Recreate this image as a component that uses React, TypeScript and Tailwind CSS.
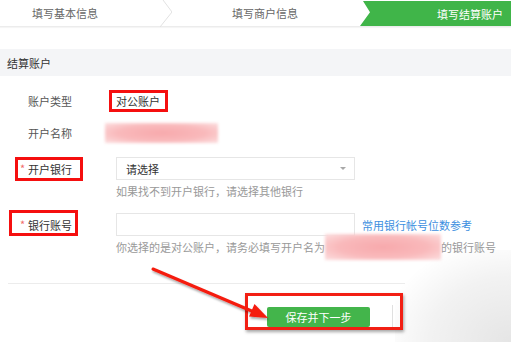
import React from "react";

const Pink = ({ className }: { className: string }) => (
  <div
    className={`bg-[radial-gradient(ellipse_at_center,#f7a9ac_0%,#f9b9bb_55%,#fcdfe0_100%)] blur-[1.5px] ${className}`}
  />
);

export default function App() {
  return (
    <div className="relative w-[511px] h-[342px] overflow-hidden bg-white font-['Noto_Sans_CJK_SC','Noto_Sans',sans-serif] text-[11px] leading-[14px] text-[#555]">
      {/* Steps */}
      <div className="flex h-[27px] items-stretch border-b border-[#ececec] shadow-[0_1px_1px_rgba(0,0,0,0.04)]">
        <div className="flex w-[160px] items-center pl-[32px] text-[#666]">填写基本信息</div>
        <svg width="12" height="27" viewBox="0 0 12 27" className="shrink-0">
          <polyline points="3,0 12,12 0,27" fill="none" stroke="#e2e2e2" strokeWidth="1" />
        </svg>
        <div className="flex w-[188px] items-center pl-[60px] text-[#666]">填写商户信息</div>
        <div className="mt-[1px] flex h-[25px] flex-1 items-center bg-[#40b549] pl-[77px] text-white [clip-path:polygon(3px_0,100%_0,100%_100%,0_100%,10px_45%)]">
          填写结算账户
        </div>
      </div>

      {/* Section header */}
      <div className="mt-[22px] flex h-[27px] items-center bg-[#f4f5f7] pl-[7px] text-[#333]">结算账户</div>

      {/* Form */}
      <div className="flex flex-col">
        <div className="mt-[14px] flex h-[22px] items-center">
          <div className="w-[116px] pl-[28px]">账户类型</div>
          <div className="text-[#333]">对公账户</div>
        </div>
        <div className="mt-[11px] flex h-[20px] items-center">
          <div className="w-[116px] pl-[28px]">开户名称</div>
          <Pink className="-ml-[11px] h-[20px] w-[113px]" />
        </div>
        <div className="mt-[14px] flex h-[23px] items-center">
          <div className="w-[116px] pl-[28px]">
            <span className="relative text-[#333]">
              <span className="absolute -left-[8px] top-0 text-[#f26b6b]">*</span>开户银行
            </span>
          </div>
          <div className="flex h-[23px] w-[239px] items-center justify-between border border-[#e6e6e6] pl-[9px] pr-[8px] text-[#333]">
            <span>请选择</span>
            <span className="h-0 w-0 border-x-[3px] border-t-[3px] border-x-transparent border-t-[#a8a8a8]" />
          </div>
        </div>
        <div className="mt-[4px] pl-[116px] text-[#999]">如果找不到开户银行，请选择其他银行</div>
        <div className="mt-[15px] flex h-[23px] items-center">
          <div className="w-[116px] pl-[28px]">
            <span className="relative text-[#333]">
              <span className="absolute -left-[8px] top-0 text-[#f26b6b]">*</span>银行账号
            </span>
          </div>
          <div className="h-[23px] w-[239px] border border-[#e6e6e6]" />
          <span className="ml-[7px] text-[#3d8fe0]">常用银行帐号位数参考</span>
        </div>
        <div className="mt-[4px] flex h-[14px] items-center pl-[116px] text-[#999]">
          <span>你选择的是对公账户，请务必填写开户名为</span>
          <Pink className="-my-[6px] h-[26px] w-[116px]" />
          <span>的银行账号</span>
        </div>
        <div className="ml-[8px] mt-[29px] w-[397px] border-t border-[#ececec]" />
        <div className="mt-[23px] flex items-start pl-[267px]">
          <button className="flex h-[20px] w-[103px] items-center justify-center rounded-[2px] bg-[#43b54b] text-white">
            保存并下一步
          </button>
          <div className="-mt-[2px] ml-[22px] h-[23px] w-[11px] border-l border-[#e0e0e0] bg-white" />
        </div>
      </div>

      {/* right soft shading */}
      <div className="pointer-events-none absolute left-[395px] top-[250px] h-[92px] w-[116px] bg-[radial-gradient(ellipse_at_100%_100%,rgba(0,0,0,0.10)_0%,rgba(0,0,0,0.05)_50%,rgba(0,0,0,0)_80%)]" />

      {/* Annotations */}
      <div className="pointer-events-none absolute left-[109px] top-[90px] h-[22px] w-[59px] border-[3px] border-[#f50f0f]" />
      <div className="pointer-events-none absolute left-[15px] top-[157px] h-[24px] w-[68px] border-[3px] border-[#f50f0f]" />
      <div className="pointer-events-none absolute left-[9px] top-[210px] h-[26px] w-[69px] border-[3px] border-[#f50f0f]" />
      <div className="pointer-events-none absolute left-[245px] top-[293px] h-[37px] w-[158px] border-[3px] border-[#f21f14] shadow-[1px_2px_3px_rgba(0,0,0,0.35)]" />
      <svg className="pointer-events-none absolute left-0 top-0" width="511" height="342" viewBox="0 0 511 342">
        <defs>
          <filter id="sh" x="-10%" y="-10%" width="130%" height="140%">
            <feDropShadow dx="1" dy="2" stdDeviation="1.2" floodColor="#000" floodOpacity="0.35" />
          </filter>
        </defs>
        <g filter="url(#sh)">
          <line x1="153" y1="269" x2="254" y2="312" stroke="#f51a10" strokeWidth="3" strokeLinecap="round" />
          <polygon points="268,318 249,316.5 254.5,304" fill="#f51a10" />
        </g>
      </svg>
    </div>
  );
}
